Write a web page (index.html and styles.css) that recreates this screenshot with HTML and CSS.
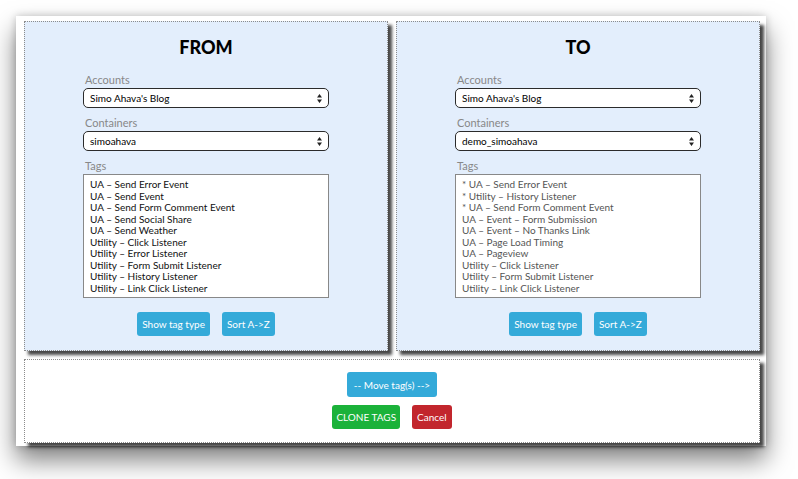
FILE: index.html
```html
<!DOCTYPE html>
<html>
<head>
<meta charset="utf-8">
<link rel="stylesheet" href="styles.css">
</head>
<body>
<div class="window">
  <div class="panels">
    <section class="panel">
      <h1 class="title">FROM</h1>
      <div class="form">
        <div class="lbl">Accounts</div>
        <div class="select"><span>Simo Ahava's Blog</span><svg class="arrows" width="5" height="9" viewBox="0 0 5 9"><path d="M2.5 0L5 3.5H0Z M2.5 9L5 5.5H0Z" fill="#222"/></svg></div>
        <div class="lbl">Containers</div>
        <div class="select"><span>simoahava</span><svg class="arrows" width="5" height="9" viewBox="0 0 5 9"><path d="M2.5 0L5 3.5H0Z M2.5 9L5 5.5H0Z" fill="#222"/></svg></div>
        <div class="lbl">Tags</div>
        <div class="list">
          <div>UA – Send Error Event</div>
          <div>UA – Send Event</div>
          <div>UA – Send Form Comment Event</div>
          <div>UA – Send Social Share</div>
          <div>UA – Send Weather</div>
          <div>Utility – Click Listener</div>
          <div>Utility – Error Listener</div>
          <div>Utility – Form Submit Listener</div>
          <div>Utility – History Listener</div>
          <div>Utility – Link Click Listener</div>
        </div>
      </div>
      <div class="btns">
        <button class="btn blue">Show tag type</button>
        <button class="btn blue">Sort A-&gt;Z</button>
      </div>
    </section>
    <section class="panel">
      <h1 class="title">TO</h1>
      <div class="form">
        <div class="lbl">Accounts</div>
        <div class="select"><span>Simo Ahava's Blog</span><svg class="arrows" width="5" height="9" viewBox="0 0 5 9"><path d="M2.5 0L5 3.5H0Z M2.5 9L5 5.5H0Z" fill="#222"/></svg></div>
        <div class="lbl">Containers</div>
        <div class="select"><span>demo_simoahava</span><svg class="arrows" width="5" height="9" viewBox="0 0 5 9"><path d="M2.5 0L5 3.5H0Z M2.5 9L5 5.5H0Z" fill="#222"/></svg></div>
        <div class="lbl">Tags</div>
        <div class="list dim">
          <div>* UA – Send Error Event</div>
          <div>* Utility – History Listener</div>
          <div>* UA – Send Form Comment Event</div>
          <div>UA – Event – Form Submission</div>
          <div>UA – Event – No Thanks Link</div>
          <div>UA – Page Load Timing</div>
          <div>UA – Pageview</div>
          <div>Utility – Click Listener</div>
          <div>Utility – Form Submit Listener</div>
          <div>Utility – Link Click Listener</div>
        </div>
      </div>
      <div class="btns">
        <button class="btn blue">Show tag type</button>
        <button class="btn blue">Sort A-&gt;Z</button>
      </div>
    </section>
  </div>
  <section class="actions">
    <button class="btn blue move">-- Move tag(s) --&gt;</button>
    <div class="btns row">
      <button class="btn green">CLONE TAGS</button>
      <button class="btn red">Cancel</button>
    </div>
  </section>
</div>
</body>
</html>
```

FILE: styles.css
```css
html, body {
  margin: 0;
  padding: 0;
  background: #ffffff;
}
body {
  font-family: Lato, "Open Sans", sans-serif;
  font-size: 10px;
  color: #111;
  min-height: 479px;
  padding-top: 16px;
  box-sizing: border-box;
}
.window {
  position: relative;
  margin: 0 0 0 16px;
  width: 750px;
  height: 430px;
  box-sizing: border-box;
  padding: 5px 6px 3px 8px;
  background: #fff;
  box-shadow: 0 14px 24px rgba(0,0,0,0.5), 0 0 8px rgba(0,0,0,0.2);
}
.panels {
  display: grid;
  grid-template-columns: 364px 364px;
  column-gap: 8px;
  height: 330px;
}
.panel {
  box-sizing: border-box;
  height: 330px;
  border: 1px dotted #8c8c8c;
  background: #e3eefc;
  box-shadow: 4px 4px 3px rgba(0,0,0,0.72);
  padding-top: 14px;
  display: flex;
  flex-direction: column;
  align-items: center;
}
.title {
  margin: 0;
  font-size: 18px;
  line-height: 22px;
  font-weight: 900;
  color: #000;
  text-align: center;
}
.form {
  width: 246px;
  margin-top: 15px;
  display: flex;
  flex-direction: column;
}
.lbl {
  font-size: 11px;
  line-height: 13px;
  color: #888;
  padding-left: 2px;
  margin-bottom: 2px;
}
.select {
  position: relative;
  box-sizing: border-box;
  height: 20px;
  border: 1px solid #2b2b2b;
  border-radius: 5px;
  background: #fff;
  display: flex;
  align-items: center;
  padding-left: 6px;
  margin-bottom: 8px;
  font-size: 10px;
  color: #000;
}
.arrows {
  position: absolute;
  right: 6px;
  top: 5px;
}
.list {
  box-sizing: border-box;
  height: 124px;
  border: 1px solid #888;
  background: #fff;
  padding: 4px 6px;
  line-height: 11.5px;
  font-size: 10px;
  color: #111;
  white-space: nowrap;
}
.list.dim {
  color: #555;
}
.btns {
  display: flex;
  gap: 12px;
  justify-content: center;
  margin-top: 14px;
}
.btn {
  box-sizing: border-box;
  height: 24px;
  border: none;
  border-radius: 3px;
  padding: 0 5px;
  font-family: Lato, "Open Sans", sans-serif;
  font-size: 10px;
  color: #fff;
  cursor: pointer;
}
.blue {
  background: #34aad9;
}
.green {
  background: #1bb23a;
  padding: 0 4px;
}
.red {
  background: #c2262d;
}
.actions {
  box-sizing: border-box;
  margin-top: 8px;
  height: 84px;
  border: 1px dotted #8c8c8c;
  background: #fff;
  box-shadow: 4px 4px 3px rgba(0,0,0,0.72);
  padding-top: 12px;
  display: flex;
  flex-direction: column;
  align-items: center;
}
.move {
  height: 25px;
  padding: 0 6.5px;
}
.btns.row {
  margin-top: 8px;
}
```
